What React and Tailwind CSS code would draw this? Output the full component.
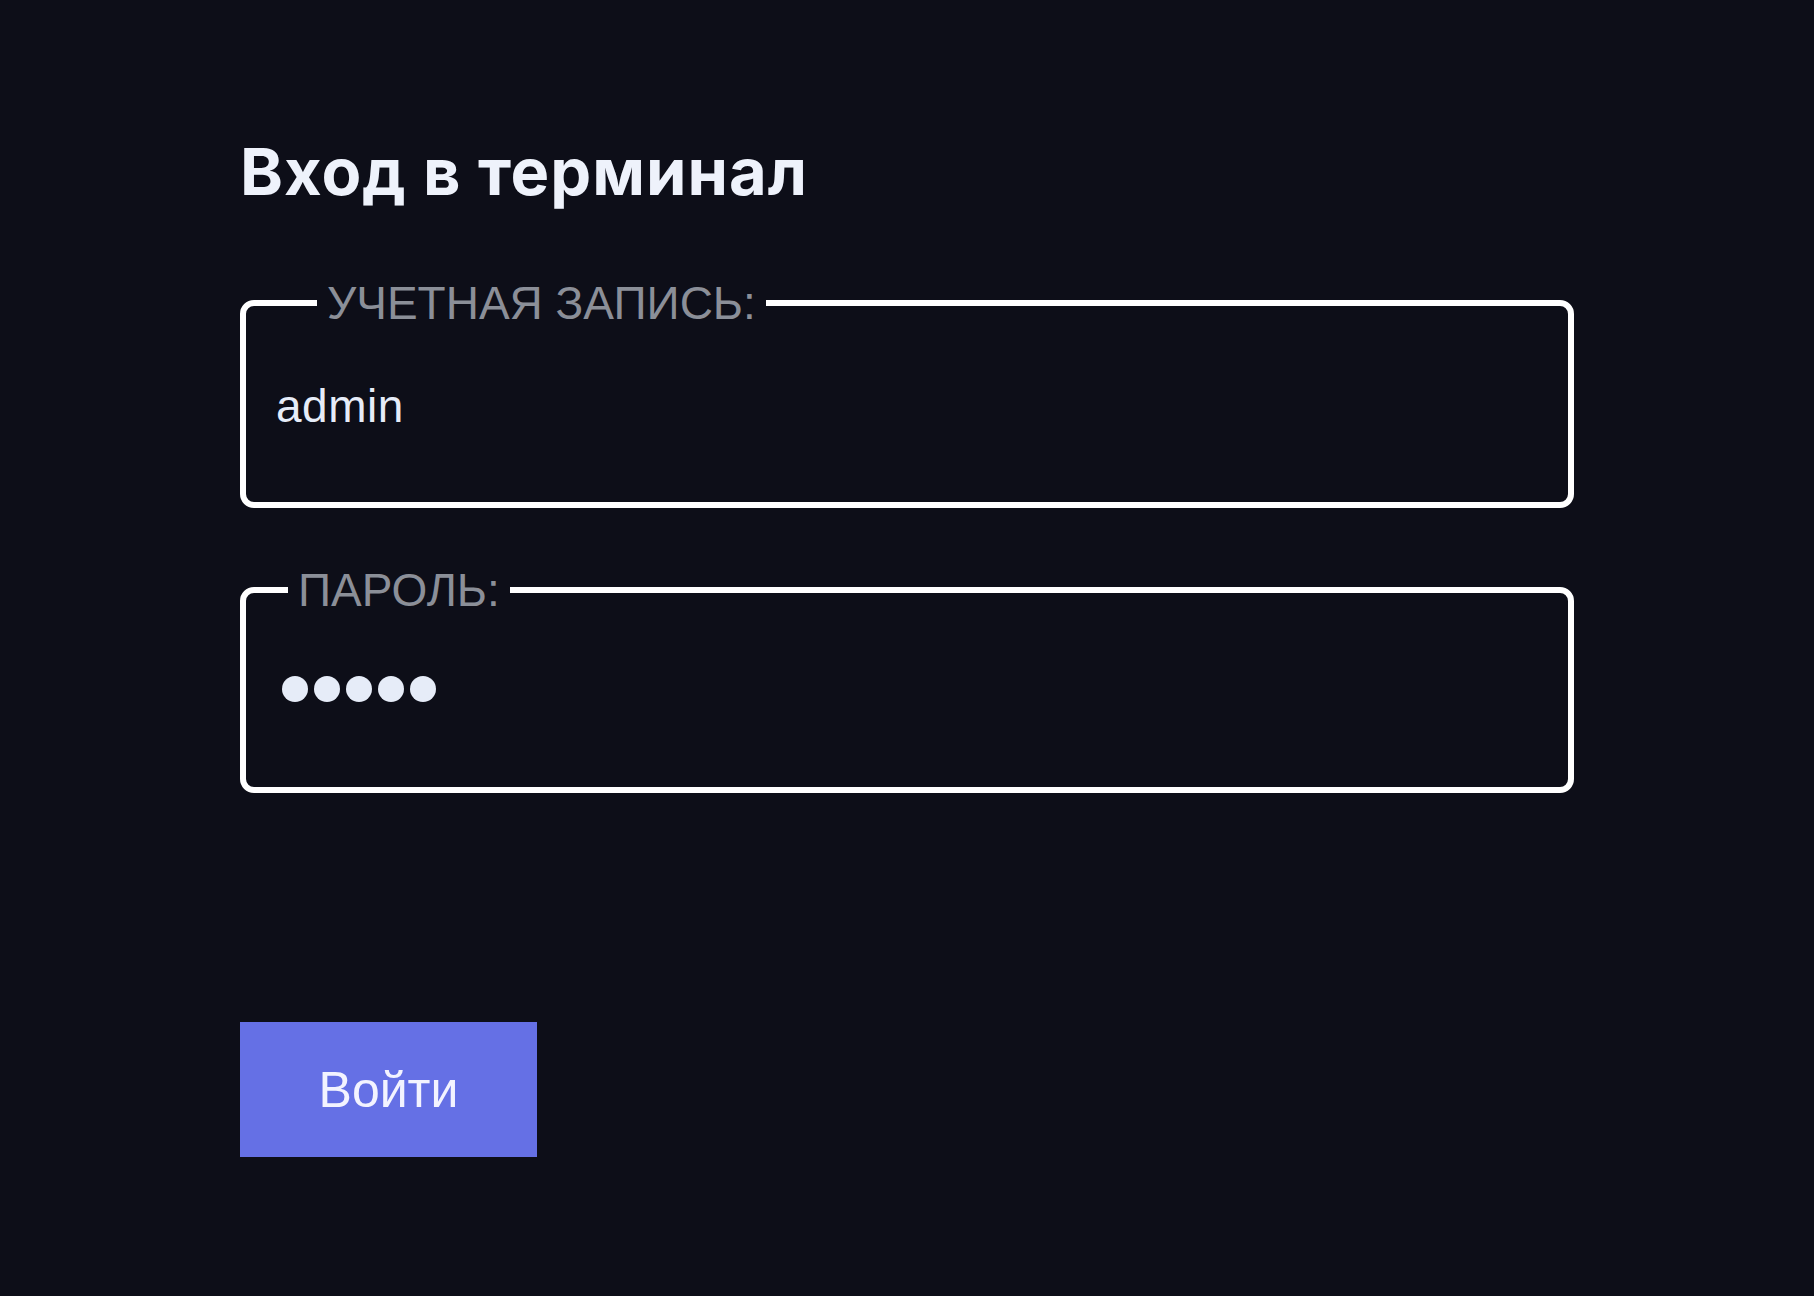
export default function App() {
    return (
        <div className="min-h-[1296px] w-full bg-[#0d0e18] px-[240px] pt-[139px]" style={{ fontFamily: '"Liberation Sans", Arial, sans-serif' }}>
            <h1 className="text-[65px] leading-none font-bold text-[#eef2fb] tracking-[1px]" style={{ fontFamily: 'Inter, "Noto Sans", sans-serif' }}>
                Вход в терминал
            </h1>

            <form onSubmit={(e) => e.preventDefault()} className="mt-[76px]">
                <fieldset className="m-0 p-0 border-[6px] border-white rounded-[14px]">
                    <legend className="ml-[71px] px-[10px] text-[46px] leading-none text-[#8b8f98]">УЧЕТНАЯ ЗАПИСЬ:</legend>
                    <div className="h-[176px] pl-[30px] pt-[53px]">
                        <input
                            className="w-full bg-transparent outline-none text-[46px] leading-none text-[#e6ecf8] tracking-[0.5px]"
                            type="text" defaultValue="admin" readOnly
                        />
                    </div>
                </fieldset>

                <fieldset className="mt-[59px] m-0 p-0 border-[6px] border-white rounded-[14px]">
                    <legend className="ml-[42px] px-[10px] text-[46px] leading-none text-[#8b8f98]">ПАРОЛЬ:</legend>
                    <div className="h-[174px] pl-[36px] flex items-center pb-[22px]">
                        <div className="flex gap-[6px]">
                            <span className="w-[26px] h-[26px] rounded-full bg-[#e6ecf8]" />
                            <span className="w-[26px] h-[26px] rounded-full bg-[#e6ecf8]" />
                            <span className="w-[26px] h-[26px] rounded-full bg-[#e6ecf8]" />
                            <span className="w-[26px] h-[26px] rounded-full bg-[#e6ecf8]" />
                            <span className="w-[26px] h-[26px] rounded-full bg-[#e6ecf8]" />
                        </div>
                    </div>
                </fieldset>

                <button className="mt-[229px] w-[297px] h-[135px] bg-[#6570e5] text-[50px] leading-none text-[#f3f3ff]">
                    Войти
                </button>
            </form>
        </div>
    )
}
